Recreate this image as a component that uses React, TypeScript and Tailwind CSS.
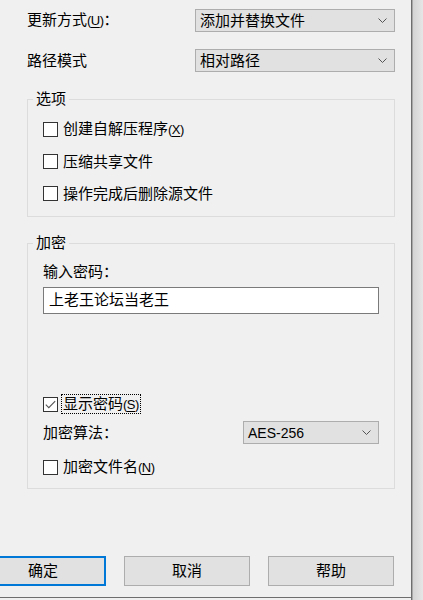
const FONT = { fontFamily: '"Liberation Sans", "Noto Sans CJK SC", sans-serif' };

function Chevron() {
  return (
    <svg width="9" height="5" viewBox="0 0 9 5" className="shrink-0">
      <path d="M0.5 0.5 L4.5 4.5 L8.5 0.5" fill="none" stroke="#555" strokeWidth="1" />
    </svg>
  );
}

function Select({ value, className }: { value: string; className: string }) {
  return (
    <div
      className={`flex h-[23px] items-center justify-between border border-[#adadad] bg-[#e1e1e1] pl-[4px] pr-[7px] text-[15px] leading-[20px] text-black ${className}`}
    >
      <span>{value}</span>
      <Chevron />
    </div>
  );
}

function Mn({ c }: { c: string }) {
  // mnemonic: (X) with the letter underlined
  return (
    <span className="text-[13px] tracking-[-0.5px]">
      (<span className="underline underline-offset-[2px]">{c}</span>)
    </span>
  );
}

function Checkbox({ checked, label, focus }: { checked?: boolean; label: React.ReactNode; focus?: boolean }) {
  return (
    <div className="flex h-[20px] items-center">
      <div className="flex h-[15px] w-[15px] shrink-0 items-center justify-center border border-[#333] bg-white">
        {checked && (
          <svg width="11" height="9" viewBox="0 0 11 9">
            <path d="M0.8 4.6 L3.8 7.6 L10.2 1.2" fill="none" stroke="#555" strokeWidth="1.1" />
          </svg>
        )}
      </div>
      <span
        className={`text-[15px] leading-[17px] text-black ${
          focus ? "ml-[3px] border border-dotted border-black px-[1px]" : "ml-[5px]"
        }`}
      >
        {label}
      </span>
    </div>
  );
}

function Group({ title, className, children }: { title: string; className: string; children: React.ReactNode }) {
  return (
    <div className={`relative border border-[#dcdcdc] ${className}`}>
      <span className="absolute -top-[11px] left-[5px] bg-[#f0f0f0] px-[3px] text-[15px] leading-[20px] text-black">
        {title}
      </span>
      {children}
    </div>
  );
}

function Button({ label, primary }: { label: string; primary?: boolean }) {
  return (
    <div
      className={`flex h-[30px] w-[126px] shrink-0 items-center justify-center bg-[#e1e1e1] text-[15px] text-black ${
        primary ? "border-2 border-[#0078d7]" : "border border-[#adadad]"
      }`}
    >
      {label}
    </div>
  );
}

export default function App() {
  return (
    <div className="flex h-[600px] w-[423px] overflow-hidden bg-[#f0f0f0]" style={FONT}>
      <div className="flex w-[411px] shrink-0 flex-col">
        <div className="flex h-[597px] flex-col pl-[27px] pr-[16px]">
          {/* Update mode */}
          <div className="mt-[9px] flex h-[23px] items-center">
            <span className="w-[168px] text-[15px] leading-[20px] text-black">
              更新方式<Mn c="U" />：
            </span>
            <Select value="添加并替换文件" className="flex-1" />
          </div>

          {/* Path mode */}
          <div className="mt-[17px] flex h-[23px] items-center">
            <span className="w-[168px] text-[15px] leading-[20px] text-black">路径模式</span>
            <Select value="相对路径" className="flex-1" />
          </div>

          {/* Options */}
          <Group title="选项" className="mt-[27px] h-[118px]">
            <div className="flex flex-col gap-[12px] pl-[15px] pt-[19px]">
              <Checkbox label={<>创建自解压程序<Mn c="X" /></>} />
              <Checkbox label="压缩共享文件" />
              <Checkbox label="操作完成后删除源文件" />
            </div>
          </Group>

          {/* Encryption */}
          <Group title="加密" className="mt-[26px] h-[246px]">
            <div className="flex flex-col px-[15px] pt-[18px]">
              <div className="h-[20px] text-[15px] leading-[20px] text-black">输入密码：</div>
              <div className="mt-[5px] flex h-[27px] items-center border border-[#7a7a7a] bg-white pl-[5px] text-[15px] text-black">
                上老王论坛当老王
              </div>
              <div className="mt-[80px]">
                <Checkbox checked focus label={<>显示密码<Mn c="S" /></>} />
              </div>
              <div className="mt-[7px] flex h-[23px] items-center justify-between">
                <span className="text-[15px] leading-[20px] text-black">加密算法：</span>
                <Select value="AES-256" className="w-[136px] !text-[14px]" />
              </div>
              <div className="mt-[13px]">
                <Checkbox label={<>加密文件名<Mn c="N" /></>} />
              </div>
            </div>
          </Group>

          {/* Buttons */}
          <div className="-ml-[47px] mt-[67px] flex gap-[18px]">
            <Button label="确定" primary />
            <Button label="取消" />
            <Button label="帮助" />
          </div>
        </div>
        <div className="h-px bg-[#6e6e6e]" />
        <div className="flex-1 bg-[#f0f0f0]" />
      </div>
      <div className="w-px bg-[#6e6e6e]" />
      <div className="w-px bg-[#a8a8a8]" />
      <div className="flex-1 bg-gradient-to-r from-[#d4d4d4] to-[#e6e6e6]" />
    </div>
  );
}
